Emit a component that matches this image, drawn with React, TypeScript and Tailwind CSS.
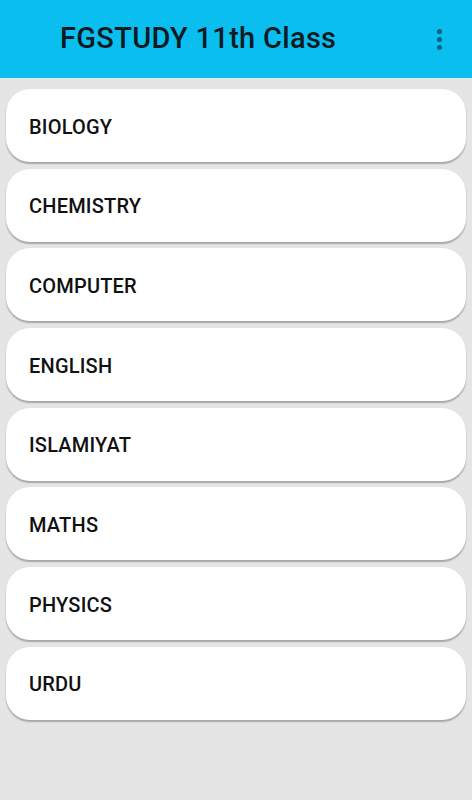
const subjects = [
  "BIOLOGY",
  "CHEMISTRY",
  "COMPUTER",
  "ENGLISH",
  "ISLAMIYAT",
  "MATHS",
  "PHYSICS",
  "URDU",
];

function MenuDots() {
  return (
    <div className="flex flex-col items-center gap-[3px]">
      <span className="w-[5px] h-[5px] rounded-full bg-[#0b5f7d]" />
      <span className="w-[5px] h-[5px] rounded-full bg-[#0b5f7d]" />
      <span className="w-[5px] h-[5px] rounded-full bg-[#0b5f7d]" />
    </div>
  );
}

export default function App() {
  return (
    <div
      className="w-full min-h-screen bg-[#e5e5e5]"
      style={{ fontFamily: "Roboto, 'Liberation Sans', sans-serif" }}
    >
      <header className="h-[78px] bg-[#0abff0] flex items-center justify-between pl-[60px] pr-[30px]">
        <h1 className="text-[29px] font-medium text-[#0d1a1f] tracking-[0.3px]">
          FGSTUDY 11th Class
        </h1>
        <MenuDots />
      </header>
      <main className="flex flex-col gap-[6.7px] px-[6px] pt-[11px]">
        {subjects.map((s) => (
          <button
            key={s}
            className="h-[73px] w-full bg-white rounded-[24px] flex items-center pl-[23px] pt-[2px] text-left shadow-[0_1.5px_1.5px_rgba(0,0,0,0.28)]"
          >
            <span className="text-[20px] font-medium text-[#111] tracking-[0.2px]">{s}</span>
          </button>
        ))}
      </main>
    </div>
  );
}
